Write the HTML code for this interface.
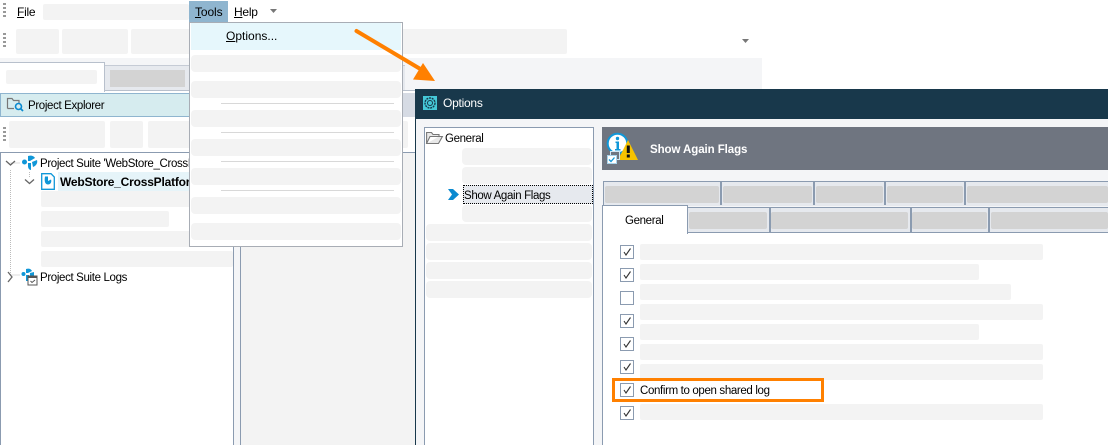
<!DOCTYPE html>
<html><head><meta charset="utf-8"><style>
html,body{margin:0;padding:0;background:#fff;width:1108px;height:445px;overflow:hidden}
body{position:relative;font:12px "Liberation Sans",sans-serif;color:#000}
div,span.t{position:absolute}
.t{white-space:nowrap;line-height:16px;letter-spacing:-.25px}
.n{font-size:11.5px;letter-spacing:-.35px;margin-top:1px}
.b{font-size:11.5px;font-weight:bold;letter-spacing:-.08px;margin-top:1px}
.g{background:#f3f3f3;border-radius:2px}
.d{background:#d3d3d3;border-radius:2px}
.l{background:#8b9bb0}
.cb{width:12px;height:12px;left:620px;border:1px solid #8b9bb0;background:#fff}
u{text-underline-offset:1px}
svg{position:absolute;overflow:visible}
</style></head><body>
<!-- menu bar -->
<div style="left:3px;top:3px;width:3px;height:15px;background:repeating-linear-gradient(#999 0 2px,transparent 2px 4px)"></div>
<span class="t" style="left:17px;top:4px"><u>F</u>ile</span>
<div class="g" style="left:43px;top:4px;width:146px;height:16px"></div>
<div style="left:189px;top:1px;width:39px;height:21px;background:#8fb5cf"></div>
<span class="t" style="left:195px;top:4px;letter-spacing:-.1px"><u>T</u>ools</span>
<span class="t" style="left:234px;top:4px"><u>H</u>elp</span>
<svg style="left:270px;top:9px" width="7" height="4"><path d="M0 0H7L3.500 4Z" fill="#777"/></svg>
<!-- toolbar -->
<div style="left:3px;top:33px;width:3px;height:15px;background:repeating-linear-gradient(#999 0 2px,transparent 2px 4px)"></div>
<div class="g" style="left:16px;top:29px;width:43px;height:25px"></div>
<div class="g" style="left:62px;top:29px;width:66px;height:25px"></div>
<div class="g" style="left:131px;top:29px;width:436px;height:25px"></div>
<svg style="left:742px;top:39px" width="7" height="4"><path d="M0 0H7L3.500 4Z" fill="#777"/></svg>
<!-- tabs strip -->
<div style="left:0;top:58px;width:762px;height:33px;background:#f4f5f7"></div>
<div style="left:105px;top:65px;width:300px;height:25px;background:#e6e9ee;border-top:1px solid #c5cbd5"></div>
<div style="left:0;top:90px;width:416px;height:1px;background:#b8c0cc"></div>
<div style="left:0;top:62px;width:104px;height:29px;background:#fff;border-top:1px solid #b8c0cc;border-right:1px solid #b8c0cc"></div>
<div class="g" style="left:6px;top:70px;width:91px;height:14px"></div>
<div style="left:110px;top:70px;width:75px;height:17px;background:#d3d3d3"></div>
<!-- project explorer header -->
<div style="left:238px;top:93px;width:178px;height:24px;background:#d6dbe4"></div>
<div style="left:0;top:93px;width:238px;height:22px;background:#d6ecef;border:1px solid #8fb5cf"></div>
<svg style="left:7px;top:97px" width="17" height="15" viewBox="0 0 17 15"><path d="M.5 11.500V1.500H5L6.500 3.500H12V6M.5 11.500H7" fill="none" stroke="#777" stroke-width="1.200"/><circle cx="11.500" cy="9.500" r="3" fill="none" stroke="#0a8ad0" stroke-width="1.600"/><path d="M13.500 11.500L16 14" stroke="#0a8ad0" stroke-width="1.800"/></svg>
<span class="t n" style="left:28px;top:97px">Project Explorer</span>
<!-- toolbar 3 -->
<div style="left:3px;top:127px;width:3px;height:15px;background:repeating-linear-gradient(#999 0 2px,transparent 2px 4px)"></div>
<div class="g" style="left:9px;top:121px;width:96px;height:27px"></div>
<div class="g" style="left:110px;top:121px;width:33px;height:27px"></div>
<div class="g" style="left:148px;top:121px;width:260px;height:27px"></div>
<!-- tree panel -->
<div style="left:0;top:152px;width:416px;height:1px;background:#8b9bb0"></div>
<div class="l" style="left:0;top:152px;width:1px;height:293px"></div>
<div class="l" style="left:233px;top:152px;width:1px;height:293px"></div>
<div style="left:234px;top:153px;width:6px;height:292px;background:#f4f5f7"></div>
<div class="l" style="left:240px;top:152px;width:1px;height:293px"></div>
<div style="left:241px;top:153px;width:174px;height:292px;background:#f3f3f3"></div>
<svg style="left:0;top:150px" width="60" height="135"><path d="M10.500 20V125M10.500 125H20M29.500 22V28M10.500 13H20" stroke="#bbb" stroke-dasharray="1 1" fill="none"/><path d="M6 11L10.500 15L15 11M25 29.500L29.500 33.500L34 29.500M8 122L12 127L8 132" fill="none" stroke="#666" stroke-width="1.300"/></svg>
<svg style="left:22px;top:155px" width="16" height="16" viewBox="0 0 16 16"><circle cx="2.500" cy="7" r="2.500" fill="#1097d8"/><path d="M6 1C9 0 12 1 13 3L8 6H6ZM6 8H9V15C7 15 6 13 6 11ZM10 7L15 5C16 8 14 11 11 12Z" fill="#1097d8"/></svg>
<span class="t n" style="left:40px;top:155px">Project Suite 'WebStore_CrossI</span>
<div style="left:58px;top:172px;width:135px;height:19px;background:#e6f4f9"></div>
<svg style="left:41px;top:173px" width="14" height="17" viewBox="0 0 14 17"><path d="M.7.700H10L13.300 4V16.300H.7Z" fill="#fff" stroke="#1097d8" stroke-width="1.300"/><path d="M4 3.500H7V8L10 6.500C11 9 9.500 11.500 7 11.500S3 9 4 3.500Z" fill="#1097d8"/></svg>
<span class="t" style="left:60px;top:174px;font-weight:bold;letter-spacing:-.2px">WebStore_CrossPlatform</span>
<div class="g" style="left:41px;top:191px;width:192px;height:16px"></div>
<div class="g" style="left:41px;top:211px;width:128px;height:16px"></div>
<div class="g" style="left:41px;top:231px;width:192px;height:16px"></div>
<div class="g" style="left:41px;top:251px;width:192px;height:16px"></div>
<svg style="left:21px;top:268px" width="17" height="18" viewBox="0 0 17 18"><circle cx="2.500" cy="6" r="2" fill="#1097d8"/><path d="M5 1C8 0 10 1 11 3L7 5H5ZM5 7H8V13H5ZM9 5L13 4V8H9Z" fill="#1097d8"/><rect x="7" y="8" width="9" height="9" fill="#fff" stroke="#555"/><path d="M7 8H16V10H7Z" fill="#555"/><path d="M9.500 13L11 14.500L14 12" fill="none" stroke="#555"/></svg>
<span class="t n" style="left:40px;top:269px">Project Suite Logs</span>
<!-- dropdown menu -->
<div style="left:189px;top:22px;width:212px;height:223px;background:#fff;border:1px solid #a8adb5"></div>
<div style="left:191px;top:23px;width:210px;height:27px;background:#e6f7fc"></div>
<span class="t" style="left:226px;top:28px;letter-spacing:0"><u>O</u>ptions...</span>
<div class="g" style="left:191px;top:55px;width:210px;height:17px;border-radius:4px"></div>
<div class="g" style="left:191px;top:81px;width:210px;height:17px;border-radius:4px"></div>
<div style="left:221px;top:103px;width:173px;height:1px;background:#d8d8d8"></div>
<div class="g" style="left:191px;top:110px;width:210px;height:17px;border-radius:4px"></div>
<div style="left:221px;top:132px;width:173px;height:1px;background:#d8d8d8"></div>
<div class="g" style="left:191px;top:139px;width:210px;height:17px;border-radius:4px"></div>
<div style="left:221px;top:161px;width:173px;height:1px;background:#d8d8d8"></div>
<div class="g" style="left:191px;top:168px;width:210px;height:17px;border-radius:4px"></div>
<div style="left:221px;top:190px;width:173px;height:1px;background:#d8d8d8"></div>
<div class="g" style="left:191px;top:197px;width:210px;height:17px;border-radius:4px"></div>
<div class="g" style="left:191px;top:223px;width:210px;height:17px;border-radius:4px"></div>
<!-- dialog -->
<div style="left:415px;top:89px;width:693px;height:356px;background:#f4f5f7"></div>
<div style="left:415px;top:89px;width:1px;height:356px;background:#18384b"></div>
<div style="left:415px;top:89px;width:693px;height:30px;background:#18384b"></div>
<svg style="left:423px;top:96px" width="14" height="14" viewBox="0 0 14 14"><rect width="14" height="14" fill="#45c8d8"/><circle cx="7" cy="7" r="5" fill="none" stroke="#18384b" stroke-width="1.400" stroke-dasharray="2 .8"/><circle cx="7" cy="7" r="2.500" fill="none" stroke="#18384b"/></svg>
<span class="t" style="left:443px;top:95px;color:#fff">Options</span>
<!-- left list -->
<div style="left:424px;top:127px;width:168px;height:318px;background:#fff;border:1px solid #8b9bb0;border-bottom:0"></div>
<svg style="left:426px;top:131px" width="17" height="14" viewBox="0 0 17 14"><path d="M.6 12.500V1.500H5.500L7 3.500H13V5.500H4L.6 12.500H12.500L16.400 5.500H13" fill="#e8e8e8" stroke="#777" stroke-width="1.100"/></svg>
<span class="t n" style="left:445px;top:130px">General</span>
<div class="g" style="left:462px;top:148px;width:130px;height:17px;border-radius:4px"></div>
<div class="g" style="left:462px;top:167px;width:130px;height:17px;border-radius:4px"></div>
<svg style="left:448px;top:189px" width="11" height="11"><path d="M0 0H5L11 5.500L5 11H0L4 5.500Z" fill="#0a8ad0"/></svg>
<div style="left:463px;top:185px;width:128px;height:17px;background:#e6e9ee;border:1px dotted #000"></div>
<span class="t n" style="left:464px;top:187px">Show Again Flags</span>
<div class="g" style="left:462px;top:205px;width:130px;height:17px;border-radius:4px"></div>
<div class="g" style="left:426px;top:224px;width:166px;height:17px;border-radius:4px"></div>
<div class="g" style="left:426px;top:243px;width:166px;height:17px;border-radius:4px"></div>
<div class="g" style="left:426px;top:262px;width:166px;height:17px;border-radius:4px"></div>
<div class="g" style="left:426px;top:281px;width:166px;height:17px;border-radius:4px"></div>
<!-- header -->
<div style="left:602px;top:127px;width:506px;height:43px;background:#6f7580"></div>
<svg style="left:604px;top:132px" width="36" height="33" viewBox="0 0 36 33"><circle cx="13.500" cy="11.500" r="9.800" fill="#fff" stroke="#1097d8" stroke-width="2"/><circle cx="13.500" cy="6.500" r="1.700" fill="#1097d8"/><path d="M11.500 9.500H15V17H16.500V18.500H11V17H12.500V11H11.500Z" fill="#1097d8"/><path d="M24 8L34 28H14Z" fill="#f7c300"/><rect x="22.800" y="13.500" width="3" height="7.500" fill="#111"/><rect x="22.800" y="22.500" width="3" height="3" fill="#111"/><rect x="6.500" y="19.500" width="9" height="8" fill="#6f7580" stroke="#cfe6f4"/><rect x="3.500" y="23.500" width="9" height="8" fill="#fff" stroke="#a9d3ea"/><path d="M5 27.500L7 29.500L10.500 25.500" fill="none" stroke="#1097d8" stroke-width="1.300"/></svg>
<span class="t b" style="left:650px;top:141px;color:#fff">Show Again Flags</span>
<!-- tabs row 1 -->
<div style="left:603px;top:181px;width:505px;height:24px;background:#e6e9ee;border-top:1px solid #8b9bb0"></div>
<div class="l" style="left:603px;top:181px;width:1px;height:24px"></div>
<div class="l" style="left:720px;top:181px;width:2px;height:24px"></div>
<div class="l" style="left:813px;top:181px;width:2px;height:24px"></div>
<div class="l" style="left:884px;top:181px;width:2px;height:24px"></div>
<div class="l" style="left:964px;top:181px;width:2px;height:24px"></div>
<div class="d" style="left:605px;top:186px;width:114px;height:17px"></div>
<div class="d" style="left:723px;top:186px;width:89px;height:17px"></div>
<div class="d" style="left:816px;top:186px;width:67px;height:17px"></div>
<div class="d" style="left:887px;top:186px;width:76px;height:17px"></div>
<div class="d" style="left:967px;top:186px;width:141px;height:17px"></div>
<!-- main content panel -->
<div style="left:602px;top:231px;width:506px;height:214px;background:#fff"></div>
<div class="l" style="left:602px;top:231px;width:1px;height:214px"></div>
<!-- tabs row 2 -->
<div style="left:687px;top:207px;width:421px;height:24px;background:#e6e9ee;border-top:1px solid #8b9bb0;border-bottom:1px solid #8b9bb0"></div>
<div class="l" style="left:769px;top:207px;width:2px;height:25px"></div>
<div class="l" style="left:910px;top:207px;width:2px;height:25px"></div>
<div class="l" style="left:988px;top:207px;width:2px;height:25px"></div>
<div class="d" style="left:689px;top:212px;width:78px;height:17px"></div>
<div class="d" style="left:771px;top:212px;width:137px;height:17px"></div>
<div class="d" style="left:912px;top:212px;width:75px;height:17px"></div>
<div class="d" style="left:991px;top:212px;width:117px;height:17px"></div>
<div style="left:602px;top:205px;width:84px;height:28px;background:#fff;border:1px solid #8b9bb0;border-bottom:0"></div>
<span class="t n" style="left:625px;top:212px">General</span>
<!-- rows -->
<div class="g" style="left:640px;top:244px;width:403px;height:16px"></div>
<div class="g" style="left:640px;top:264px;width:339px;height:16px"></div>
<div class="g" style="left:640px;top:284px;width:371px;height:16px"></div>
<div class="g" style="left:640px;top:304px;width:403px;height:16px"></div>
<div class="g" style="left:640px;top:324px;width:339px;height:16px"></div>
<div class="g" style="left:640px;top:344px;width:403px;height:16px"></div>
<div class="g" style="left:640px;top:364px;width:403px;height:16px"></div>
<div class="g" style="left:640px;top:404px;width:403px;height:16px"></div>
<div class="cb" style="top:245px"><svg width="12" height="12"><path d="M3 6L5 9L9.500 2.500" fill="none" stroke="#333" stroke-width="1.100"/></svg></div>
<div class="cb" style="top:268px"><svg width="12" height="12"><path d="M3 6L5 9L9.500 2.500" fill="none" stroke="#333" stroke-width="1.100"/></svg></div>
<div class="cb" style="top:291px"></div>
<div class="cb" style="top:314px"><svg width="12" height="12"><path d="M3 6L5 9L9.500 2.500" fill="none" stroke="#333" stroke-width="1.100"/></svg></div>
<div class="cb" style="top:337px"><svg width="12" height="12"><path d="M3 6L5 9L9.500 2.500" fill="none" stroke="#333" stroke-width="1.100"/></svg></div>
<div class="cb" style="top:360px"><svg width="12" height="12"><path d="M3 6L5 9L9.500 2.500" fill="none" stroke="#333" stroke-width="1.100"/></svg></div>
<div class="cb" style="top:383px"><svg width="12" height="12"><path d="M3 6L5 9L9.500 2.500" fill="none" stroke="#333" stroke-width="1.100"/></svg></div>
<div class="cb" style="top:406px"><svg width="12" height="12"><path d="M3 6L5 9L9.500 2.500" fill="none" stroke="#333" stroke-width="1.100"/></svg></div>
<span class="t n" style="left:640px;top:382px">Confirm to open shared log</span>
<div style="left:612px;top:378px;width:206px;height:18px;border:3px solid #ff8000"></div>
<!-- arrow -->
<svg style="left:0;top:0" width="1108" height="445"><path d="M356.500 31L422 70" stroke="#ff8000" stroke-width="4" stroke-linecap="round" fill="none"/><path d="M423 63L435 81L413 79.500Z" fill="#ff8000"/></svg>
</body></html>
